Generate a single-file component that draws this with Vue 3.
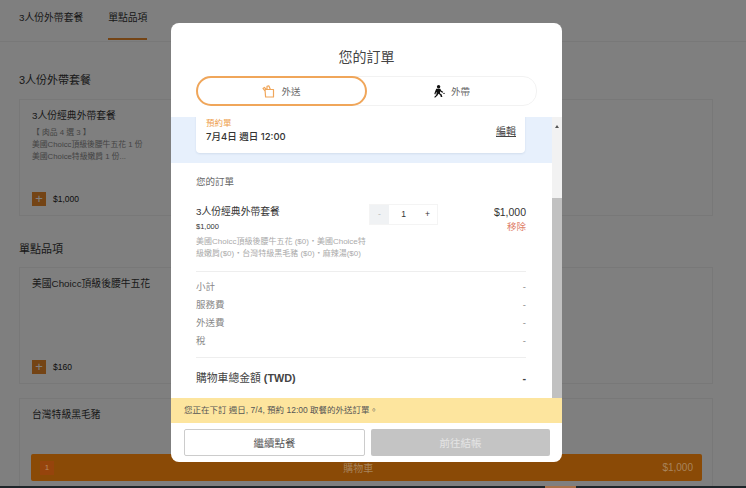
<template>
  <div class="page">
    <nav class="tabs">
      <span class="tab">3人份外帶套餐</span>
      <span class="tab tab-on">單點品項</span>
    </nav>
    <h2 class="sec first">3人份外帶套餐</h2>
    <div class="card c1">
      <div class="c-title">3人份經典外帶套餐</div>
      <div class="c-desc">【 肉品 4 選 3 】<br>美國Choicc頂級後腰牛五花 1 份<br>美國Choice特級嫩肩 1 份...</div>
      <div class="c-foot"><span class="plus">+</span><span>$1,000</span></div>
    </div>
    <h2 class="sec second">單點品項</h2>
    <div class="card c2">
      <div class="c-title">美國Choicc頂級後腰牛五花</div>
      <div class="c-foot"><span class="plus">+</span><span>$160</span></div>
    </div>
    <div class="card c3">
      <div class="c-title">台灣特級黑毛豬</div>
    </div>

    <div class="overlay"></div>

    <div class="cartbar">
      <span class="count">1</span>
      <span class="cart-label">購物車</span>
      <span class="cart-total">$1,000</span>
    </div>
    <div class="strip"><span class="strip-mark"></span></div>

    <div class="modal">
      <h1 class="m-title">您的訂單</h1>
      <div class="switch">
        <div class="sw sw-on">
          <svg width="13" height="14" viewBox="0 0 13 14" fill="none" stroke="#f0a65a" stroke-width="1.2" stroke-linejoin="round">
            <path d="M3 5.5h8.5v7.5H3.6L3 5.5z" />
            <path d="M3 7 1 4.5 2.4 3.4 4.2 5.5M5 5.5V2.4L6.8 1.8 8.4 5.5" />
          </svg>
          <span>外送</span>
        </div>
        <div class="sw">
          <svg width="12" height="13" viewBox="0 0 12 13" fill="#111">
            <circle cx="5.6" cy="1.8" r="1.7" />
            <path d="M3.2 3.8h4l1.4 2.2 1.6.7-.4 1-2-.8-.6-.9-.3 2.2 1.8 1.4.7 2.3H7.8l-.6-1.9-1.8-1.2-.9 1.6L2 12.8l-.8-.9 2-1.8.6-3-.9.7-.5 1.6-1.1-.4.7-2.3z" />
            <circle cx="11" cy="8.4" r=".7" />
          </svg>
          <span>外帶</span>
        </div>
      </div>

      <div class="scroll">
        <div class="scroll-body">
          <div class="blue">
            <div class="sched">
              <div>
                <div class="s-label">預約單</div>
                <div class="s-time">7月4日 週日 12:00</div>
              </div>
              <a class="s-edit">編輯</a>
            </div>
          </div>
          <div class="order">
            <div class="o-head">您的訂單</div>
            <div class="item">
              <div class="i-left">
                <div class="i-name">3人份經典外帶套餐</div>
                <div class="i-price">$1,000</div>
                <div class="i-sub">美國Choicc頂級後腰牛五花 ($0)・美國Choice特<br>級嫩肩($0)・台灣特級黑毛豬 ($0)・麻辣湯($0)</div>
              </div>
              <div class="qty">
                <span class="q-btn q-off">-</span>
                <span class="q-num">1</span>
                <span class="q-btn">+</span>
              </div>
              <div class="i-right">
                <div class="i-total">$1,000</div>
                <div class="i-remove">移除</div>
              </div>
            </div>
            <div class="fees">
              <div v-for="f in fees" :key="f" class="fee"><span>{{ f }}</span><span>-</span></div>
            </div>
            <div class="total"><span>購物車總金額 <b>(TWD)</b></span><b>-</b></div>
          </div>
        </div>
        <div class="bar">
          <span class="arrow"></span>
          <span class="thumb"></span>
        </div>
      </div>

      <div class="notice">您正在下訂 週日, 7/4, 預約 12:00 取餐的外送訂單。</div>
      <div class="actions">
        <button class="btn btn-line">繼續點餐</button>
        <button class="btn btn-off">前往結帳</button>
      </div>
    </div>
  </div>
</template>

<script setup>
const fees = ['小計', '服務費', '外送費', '稅']
</script>

<style>
html, body {
  margin: 0;
  overflow: hidden;
}
</style>

<style scoped>
.page {
  position: relative;
  width: 746px;
  height: 488px;
  overflow: hidden;
  background: #fff;
  font-family: "Liberation Sans", "Noto Sans CJK TC", sans-serif;
  color: #333;
}
.tabs {
  display: flex;
  gap: 25px;
  height: 41px;
  padding-left: 19px;
  border-bottom: 1px solid #f0f0f0;
  font-size: 9.8px;
  line-height: 14px;
}
.tab {
  padding-top: 11px;
  height: 27px;
}
.tab-on {
  border-bottom: 2px solid #e8882a;
}
.sec {
  margin: 0 0 0 19px;
  font-size: 11px;
  line-height: 16px;
  font-weight: 400;
}
.first { padding-top: 30px; }
.second { margin-top: 25px; }
.card {
  margin: 0 33px 0 19px;
  border: 1px solid #f0f0f0;
  padding: 8px 12px 9px;
  box-sizing: border-box;
  display: flex;
  flex-direction: column;
}
.c1 { height: 117px; margin-top: 11px; }
.c2 { height: 117px; margin-top: 10px; }
.c3 { height: 90px; margin-top: 14px; }
.c-title { font-size: 9.8px; line-height: 16px; }
.c-desc {
  margin-top: 3px;
  font-size: 7.8px;
  line-height: 12px;
  color: #888;
}
.c-foot {
  margin-top: auto;
  display: flex;
  align-items: center;
  gap: 7px;
  font-size: 8.5px;
  color: #222;
}
.plus {
  width: 14px;
  height: 14px;
  background: #e8882a;
  color: #fff;
  font-size: 13px;
  line-height: 14px;
  text-align: center;
}
.overlay {
  position: absolute;
  inset: 0;
  background: rgba(0, 0, 0, 0.5);
}
.cartbar {
  position: absolute;
  left: 31px;
  right: 44px;
  top: 454px;
  height: 27px;
  box-sizing: border-box;
  padding: 0 9px;
  display: flex;
  align-items: center;
  justify-content: space-between;
  background: #8a4a06;
  border-radius: 2px;
  color: #a8845c;
  font-size: 10px;
}
.count {
  width: 14px;
  height: 14px;
  background: #96440c;
  color: #b58a62;
  font-size: 8px;
  line-height: 14px;
  text-align: center;
}
.strip {
  position: absolute;
  left: 0;
  right: 0;
  bottom: 0;
  height: 2px;
  background: #1e2529;
}
.strip-mark {
  position: absolute;
  left: 545px;
  width: 31px;
  height: 2px;
  background: #a8714a;
}
.modal {
  position: absolute;
  left: 171px;
  top: 23px;
  width: 391px;
  height: 439px;
  background: #fff;
  border-radius: 8px;
  overflow: hidden;
  display: flex;
  flex-direction: column;
}
.m-title {
  margin: 0;
  padding-top: 25px;
  height: 28px;
  font-size: 14px;
  line-height: 18px;
  font-weight: 400;
  text-align: center;
  color: #444;
}
.switch {
  margin: 0 25px;
  height: 28px;
  display: flex;
  border: 1px solid #f2f2f2;
  border-radius: 14px;
  flex: none;
}
.sw {
  flex: 1;
  display: flex;
  align-items: center;
  justify-content: center;
  gap: 6px;
  font-size: 9.5px;
  color: #666;
}
.sw-on {
  margin: -1px 0 -1px -1px;
  border: 2px solid #f0a65a;
  border-radius: 15px;
  flex: none;
  width: 167px;
}
.scroll {
  margin-top: 11px;
  height: 281px;
  display: flex;
  overflow: hidden;
  position: relative;
  flex: none;
}
.scroll-body {
  flex: 1;
  min-width: 0;
}
.blue {
  display: flow-root;
  background: #e7f0fc;
  height: 46px;
}
.sched {
  margin: -4px 0 0 25px;
  width: 329px;
  height: 40px;
  background: #fff;
  border-radius: 0 0 4px 4px;
  box-shadow: 0 1px 2px rgba(60, 90, 130, 0.12);
  box-sizing: border-box;
  padding: 3px 9px 8px 10px;
  display: flex;
  align-items: center;
  justify-content: space-between;
}
.s-label {
  font-size: 8.5px;
  line-height: 12px;
  color: #ee9f50;
}
.s-time {
  font-family: Inter, "Noto Sans CJK TC", sans-serif;
  font-size: 9.5px;
  line-height: 16px;
  font-weight: 500;
  color: #333;
}
.s-edit {
  font-size: 10px;
  color: #444;
  text-decoration: underline;
}
.order {
  padding: 0 26px 0 25px;
}
.o-head {
  padding-top: 12px;
  font-size: 9.5px;
  line-height: 14px;
  color: #666;
}
.item {
  display: flex;
  margin-top: 15px;
  padding-bottom: 11px;
  border-bottom: 1px solid #eee;
}
.i-left {
  width: 170px;
}
.i-name {
  font-size: 9.8px;
  line-height: 16px;
}
.i-price {
  font-size: 7.5px;
  line-height: 12px;
  margin-top: 1px;
}
.i-sub {
  margin-top: 3px;
  font-size: 8px;
  line-height: 12px;
  white-space: nowrap;
  color: #aaa;
}
.qty {
  display: flex;
  height: 19px;
  margin-left: 3px;
  border: 1px solid #f4f4f4;
  font-size: 8.5px;
  line-height: 19px;
  text-align: center;
  color: #333;
}
.q-btn {
  width: 19px;
}
.q-off {
  background: #f0f2f4;
  color: #bbb;
}
.q-num {
  width: 29px;
}
.i-right {
  margin-left: auto;
  text-align: right;
}
.i-total {
  font-size: 10.5px;
  line-height: 16px;
}
.i-remove {
  font-size: 9.5px;
  line-height: 14px;
  color: #e0806a;
}
.fees {
  padding: 6px 0 7px;
  border-bottom: 1px solid #eee;
}
.fee {
  display: flex;
  justify-content: space-between;
  height: 18px;
  font-size: 9.5px;
  line-height: 18px;
  color: #888;
}
.total {
  display: flex;
  justify-content: space-between;
  margin-top: 12px;
  font-size: 10.8px;
  line-height: 16px;
  color: #444;
}
.bar {
  width: 10px;
  background: #f2f2f2;
  display: flex;
  flex-direction: column;
  align-items: center;
  flex: none;
}
.arrow {
  margin-top: 8px;
  width: 0;
  height: 0;
  border-left: 2.5px solid transparent;
  border-right: 2.5px solid transparent;
  border-bottom: 3px solid #555;
}
.thumb {
  margin-top: 70px;
  flex: 1;
  width: 100%;
  background: #c1c1c1;
}
.notice {
  height: 25px;
  flex: none;
  background: #fde59e;
  padding-left: 13px;
  font-size: 8.5px;
  line-height: 25px;
  color: #555;
}
.actions {
  display: flex;
  gap: 6px;
  padding: 6px 12px 0 13px;
}
.btn {
  flex: 1;
  height: 27px;
  border-radius: 2px;
  font-family: inherit;
  font-size: 10.5px;
  padding: 0;
}
.btn-line {
  background: #fff;
  border: 1px solid #ccc;
  color: #555;
}
.btn-off {
  background: #c4c4c4;
  border: 0;
  color: #e4e4e4;
}
</style>
